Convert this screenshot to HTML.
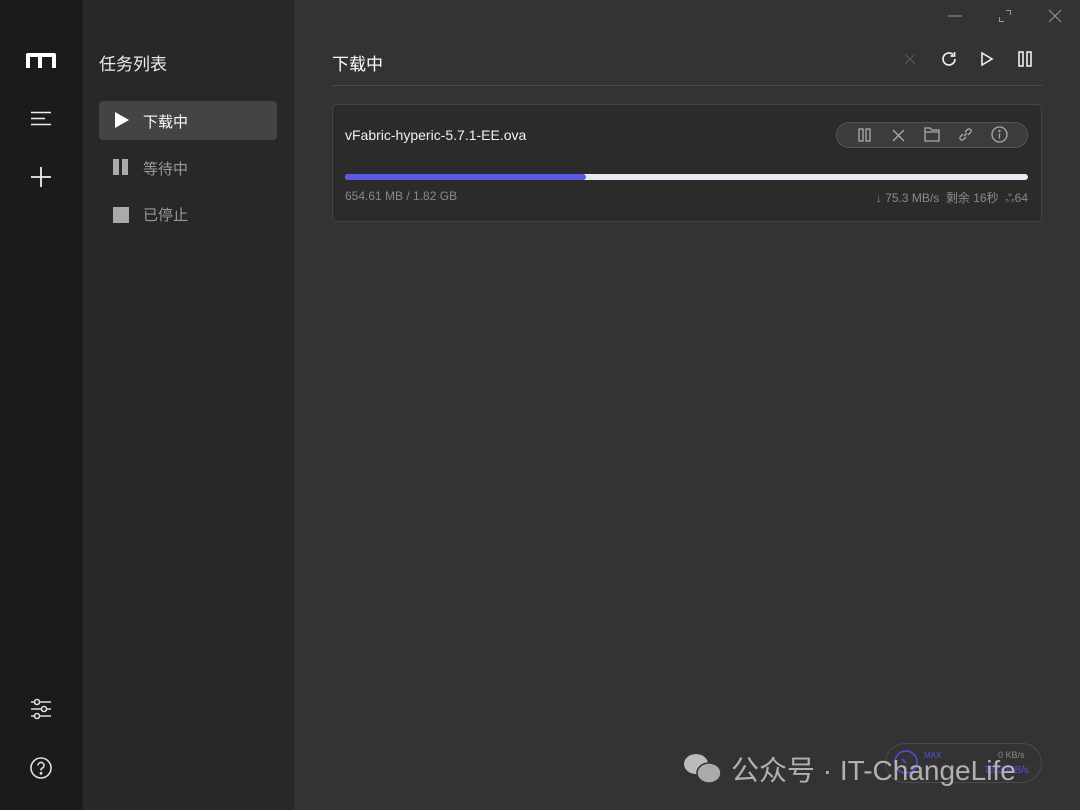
<!DOCTYPE html>
<html><head><meta charset="utf-8"><style>
*{margin:0;padding:0;box-sizing:border-box}
body{width:1080px;height:810px;background:#333;font-family:"Liberation Sans","Noto Sans CJK SC",sans-serif;position:relative;overflow:hidden}
.a{position:absolute}
.side{left:0;top:0;width:83px;height:810px;background:#1b1b1b}
.mid{left:83px;top:0;width:211px;height:810px;background:#282828}
svg{position:absolute;overflow:visible}
.t{position:absolute;white-space:nowrap}
</style></head><body>
<div class="a side"></div>
<div class="a mid"></div>
<!-- side icons -->
<svg style="left:26px;top:52px" width="30" height="16" fill="#fff"><rect x="0" y="1" width="30" height="4" rx="2"/><rect x="0" y="2" width="4" height="14"/><rect x="12" y="2" width="4" height="14"/><rect x="26" y="2" width="4" height="14"/></svg>
<svg style="left:30px;top:111px" width="22" height="16"><path d="M1 1.5h20M1 7.5h14M1 13.5h20" stroke="#eee" stroke-width="1.6" fill="none"/></svg>
<svg style="left:31px;top:167px" width="20" height="20"><path d="M10 0v20M0 10h20" stroke="#eee" stroke-width="1.8"/></svg>
<svg style="left:30px;top:699px" width="22" height="22" fill="none" stroke="#ddd" stroke-width="1.6"><path d="M1 3h20M1 10h20M1 17h20" /><circle cx="7" cy="3" r="2.5" fill="#1b1b1b"/><circle cx="14" cy="10" r="2.5" fill="#1b1b1b"/><circle cx="7" cy="17" r="2.5" fill="#1b1b1b"/></svg>
<svg style="left:30px;top:757px" width="22" height="22" fill="none" stroke="#ddd" stroke-width="1.6"><circle cx="11" cy="11" r="10"/><path d="M8 8.5a3 3 0 1 1 4 2.8c-1 .4-1 1-1 2.2"/><circle cx="11" cy="16.3" r=".6" fill="#ddd"/></svg>
<!-- mid -->
<div class="t" style="left:99px;top:50px;font-size:17px;color:#eee">任务列表</div>
<div class="a" style="left:99px;top:101px;width:178px;height:39px;background:#444;border-radius:4px"></div>
<svg style="left:115px;top:112px" width="14" height="16"><path d="M0 0L14 8L0 16Z" fill="#fff"/></svg>
<div class="t" style="left:143px;top:111px;font-size:15px;color:#fff">下载中</div>
<svg style="left:113px;top:159px" width="16" height="16"><rect x="0" y="0" width="6" height="16" fill="#aaa"/><rect x="9" y="0" width="6" height="16" fill="#aaa"/></svg>
<div class="t" style="left:143px;top:158px;font-size:15px;color:#999">等待中</div>
<svg style="left:113px;top:207px" width="16" height="16"><rect width="16" height="16" fill="#aaa"/></svg>
<div class="t" style="left:143px;top:204px;font-size:15px;color:#999">已停止</div>
<!-- window controls -->
<svg style="left:948px;top:15px" width="14" height="2"><path d="M0 1h14" stroke="#999"/></svg>
<svg style="left:999px;top:10px" width="12" height="12" fill="none" stroke="#999"><path d="M0.5 7v4.5H5M7 .5h4.5V5"/></svg>
<svg style="left:1049px;top:10px" width="12" height="12" stroke="#999"><path d="M0 0l12 12M12 0L0 12"/></svg>
<!-- header -->
<div class="t" style="left:332px;top:50px;font-size:17px;color:#fff">下载中</div>
<svg style="left:905px;top:54px" width="10" height="10" stroke="#555" stroke-width="1.2"><path d="M0 0l10 10M10 0L0 10"/></svg>
<svg style="left:941px;top:51px" width="16" height="16" fill="none" stroke="#eee" stroke-width="1.7"><path d="M14 8A6 6 0 1 1 12 3.5"/><path d="M13.5 1v4h-4"/></svg>
<svg style="left:981px;top:52px" width="12" height="14" fill="none" stroke="#eee" stroke-width="1.6"><path d="M1 1l10 6-10 6z"/></svg>
<svg style="left:1018px;top:51px" width="14" height="16" fill="none" stroke="#eee" stroke-width="1.6"><rect x="1" y="1" width="4" height="14"/><rect x="9" y="1" width="4" height="14"/></svg>
<div class="a" style="left:332px;top:85px;width:710px;height:1px;background:#4a4a4a"></div>
<!-- card -->
<div class="a" style="left:332px;top:104px;width:710px;height:118px;background:#2b2b2b;border:1px solid #444;border-radius:5px"></div>
<div class="t" style="left:345px;top:127px;font-size:14px;color:#f0f0f0">vFabric-hyperic-5.7.1-EE.ova</div>
<div class="a" style="left:836px;top:122px;width:192px;height:26px;background:#3c3c3c;border:1px solid #555;border-radius:13px"></div>
<svg style="left:858px;top:128px" width="14" height="14" fill="none" stroke="#aaa" stroke-width="1.3"><rect x="1" y="1" width="4" height="12"/><rect x="8" y="1" width="4" height="12"/></svg>
<svg style="left:893px;top:130px" width="11" height="11" stroke="#aaa" stroke-width="1.3"><path d="M0 0l11 11M11 0L0 11"/></svg>
<svg style="left:924px;top:127px" width="16" height="15" fill="none" stroke="#aaa" stroke-width="1.3"><path d="M1 1h5l2 2h7v11H1z M1 5h14"/></svg>
<svg style="left:958px;top:127px" width="15" height="15" fill="none" stroke="#aaa" stroke-width="1.3"><path d="M6 9l3-3M5 7l-2.5 2.5a2.1 2.1 0 0 0 3 3L8 10M7 5l2.5-2.5a2.1 2.1 0 0 1 3 3L10 8"/></svg>
<svg style="left:991px;top:126px" width="17" height="17" fill="none" stroke="#aaa" stroke-width="1.3"><circle cx="8.5" cy="8.5" r="7.5"/><path d="M8.5 7.5v5"/><circle cx="8.5" cy="5" r=".5" fill="#aaa"/></svg>
<div class="a" style="left:345px;top:174px;width:683px;height:6px;background:#e8eaf2;border-radius:3px"></div>
<div class="a" style="left:345px;top:174px;width:241px;height:6px;background:#5a5be0;border-radius:3px"></div>
<div class="t" style="left:345px;top:189px;font-size:12px;color:#8a8a8a">654.61 MB / 1.82 GB</div>
<div class="t" style="right:52px;top:189px;font-size:12px;color:#8a8a8a">↓ 75.3 MB/s &nbsp;剩余 16秒 &nbsp;ஃ64</div>
<!-- bottom speed widget -->
<div class="a" style="left:885px;top:743px;width:157px;height:40px;border:1px solid #4a4a4a;border-radius:20px"></div>
<svg style="left:894px;top:750px" width="24" height="24" fill="none" stroke="#5050e0" stroke-width="1.5"><circle cx="12" cy="12" r="11"/><path d="M8 9l4 4"/></svg>
<div class="t" style="left:924px;top:751px;font-size:8px;color:#5050e0">MAX</div>
<div class="t" style="left:998px;top:750px;font-size:9px;color:#888">0 KB/s</div>
<div class="t" style="left:984px;top:765px;font-size:10px;color:#5050e0">75.3 MB/s</div>
<!-- watermark -->
<svg style="left:683px;top:752px" width="40" height="32"><ellipse cx="13" cy="12" rx="12" ry="10" fill="#bbb"/><ellipse cx="26" cy="21" rx="12" ry="10" fill="#aaa" stroke="#333" stroke-width="1.5"/></svg>
<div class="t" style="left:731px;top:749px;font-size:28px;color:#c8c8c8;opacity:.85">公众号 · IT-ChangeLife</div>
</body></html>
